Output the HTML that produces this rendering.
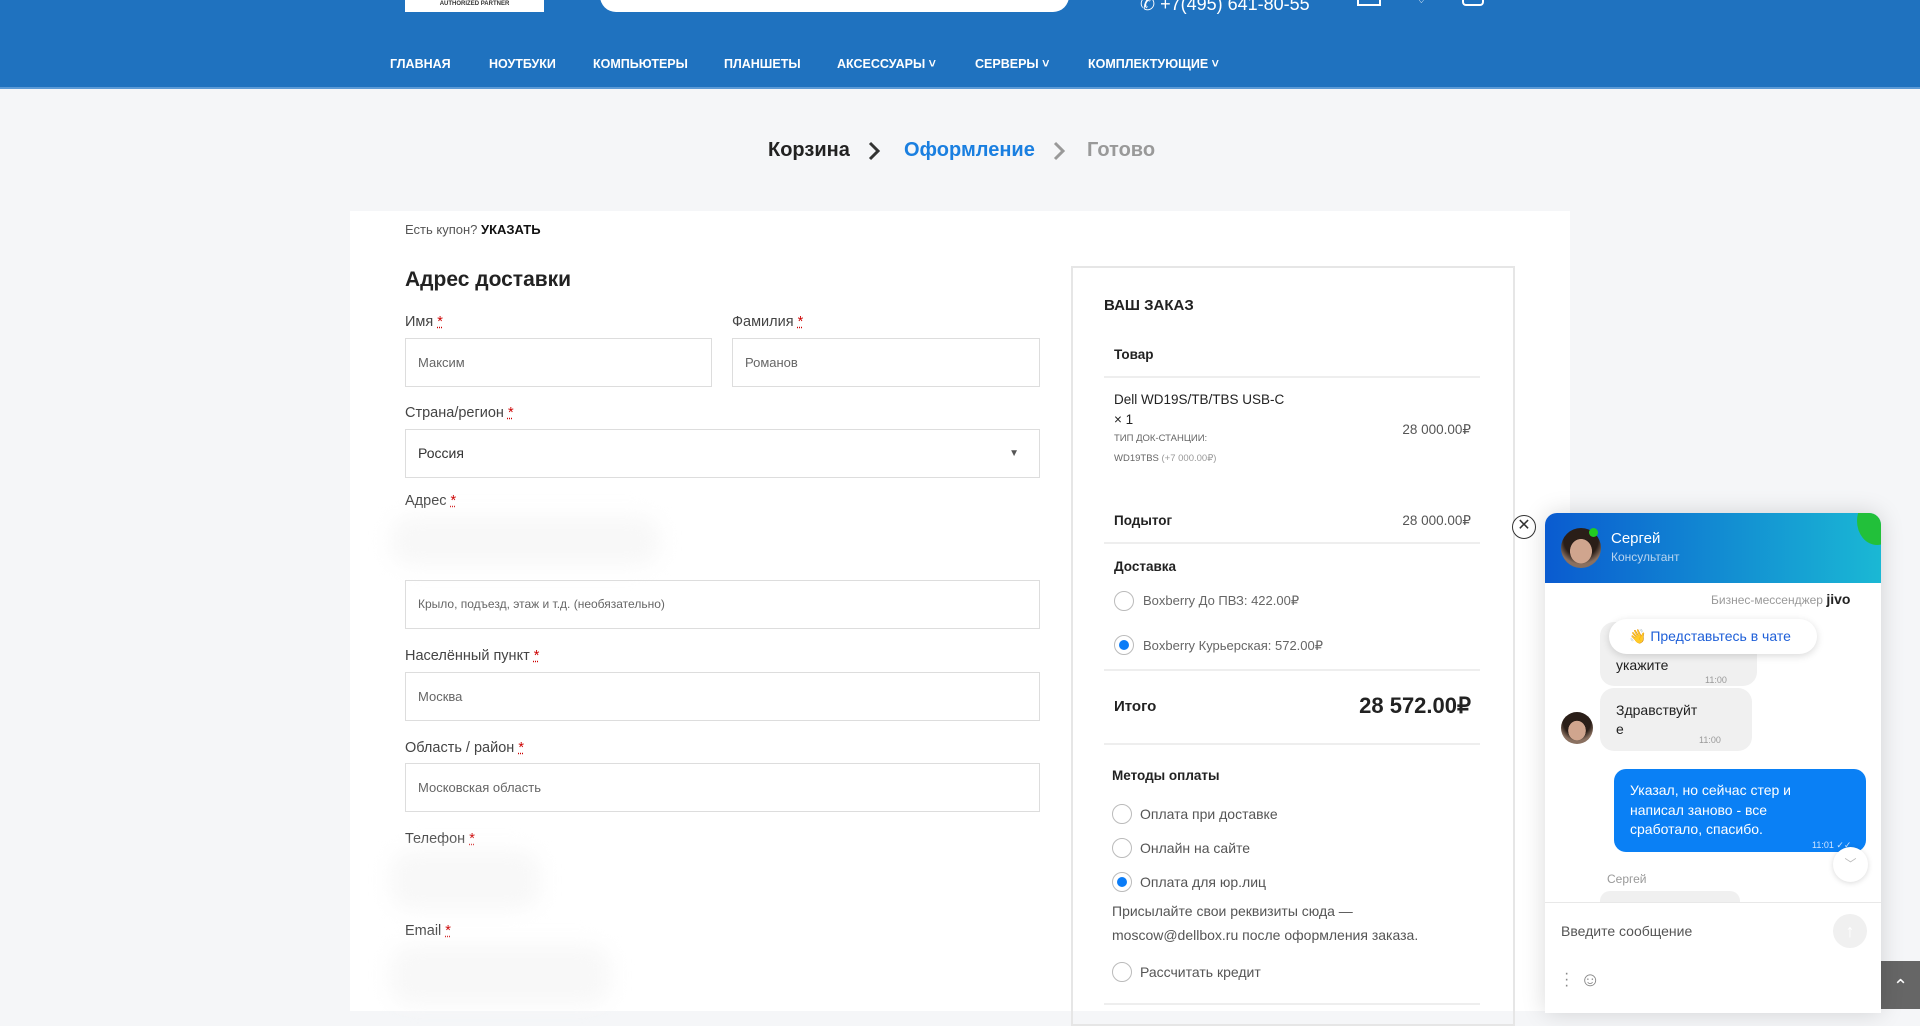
<!DOCTYPE html>
<html><head><meta charset="utf-8"><style>
*{box-sizing:border-box;margin:0;padding:0}
body{width:1920px;height:1009px;overflow:hidden;background:#f5f6f8;font-family:"Liberation Sans",sans-serif;color:#222;position:relative}
.a{position:absolute;white-space:nowrap}
.hdr{position:absolute;left:0;top:0;width:1920px;height:89px;background:#1f72bf;border-bottom:2px solid #5b9ad6}
.nav{top:57px;font-size:12.5px;font-weight:bold;color:#fff}
.card{position:absolute;left:350px;top:211px;width:1220px;height:800px;background:#fff}
.lbl{font-size:14.5px;color:#444}
.lbl b{color:#c00;font-weight:normal;text-decoration:underline dotted}
.inp{position:absolute;border:1px solid #ddd;height:49px;font-size:13px;color:#666;padding:0 12px;line-height:47px}
.blur{position:absolute;background:#f8f8f8;filter:blur(10px);border-radius:20px}
.box{position:absolute;left:1071px;top:266px;width:444px;height:760px;border:2px solid #e6e6e6}
.hl{position:absolute;left:1104px;width:376px;height:2px;background:#eee}
.rad{position:absolute;width:20px;height:20px;border-radius:50%;border:1px solid #bbb;background:#fff}
.rad.on::after{content:"";position:absolute;left:4px;top:4px;width:10px;height:10px;border-radius:50%;background:#0a7cf7}
.chat{position:absolute;left:1545px;top:513px;width:336px;height:500px;background:#fff;box-shadow:0 0 24px rgba(0,0,0,.15);border-radius:12px 12px 0 0;overflow:hidden}
.av{background:radial-gradient(ellipse 45% 50% at 50% 58%,#d0a58e 0 60%,transparent 62%),radial-gradient(circle at 50% 30%,#2a1e18 0 50%,#8a7060 70%)}
</style></head><body>
<div class="hdr"></div>
<div class="a" style="left:405px;top:0;width:139px;height:12px;background:#fff;font-size:6px;color:#333;text-align:center;line-height:6px;padding-top:1px;font-weight:bold">AUTHORIZED PARTNER</div>
<div class="a" style="left:600px;top:-20px;width:469px;height:32px;background:#fff;border-radius:0 0 16px 16px"></div>
<div class="a" style="left:1140px;top:-6px;font-size:18px;color:#fff">✆ +7(495) 641-80-55</div>
<div class="a" style="left:1357px;top:-10px;width:24px;height:16px;border:2px solid #fff;border-top:none"></div>
<div class="a" style="left:1416px;top:-8px;color:#fff;font-size:12px">♡</div>
<div class="a" style="left:1462px;top:-10px;width:22px;height:16px;border:2px solid #fff;border-radius:0 0 4px 4px"></div>
<div class="a nav" style="left:390px">ГЛАВНАЯ</div>
<div class="a nav" style="left:489px">НОУТБУКИ</div>
<div class="a nav" style="left:593px">КОМПЬЮТЕРЫ</div>
<div class="a nav" style="left:724px">ПЛАНШЕТЫ</div>
<div class="a nav" style="left:837px">АКСЕССУАРЫ ˅</div>
<div class="a nav" style="left:975px">СЕРВЕРЫ ˅</div>
<div class="a nav" style="left:1088px">КОМПЛЕКТУЮЩИЕ ˅</div>

<div class="a" style="left:768px;top:139px;font-size:20px;font-weight:bold;color:#222">Корзина</div>
<svg class="a" style="left:867px;top:140px" width="14" height="22" viewBox="0 0 14 22"><path d="M3 3l8 8-8 8" fill="none" stroke="#333" stroke-width="3"/></svg>
<div class="a" style="left:904px;top:139px;font-size:20px;font-weight:bold;color:#1a7fe0">Оформление</div>
<svg class="a" style="left:1052px;top:140px" width="14" height="22" viewBox="0 0 14 22"><path d="M3 3l8 8-8 8" fill="none" stroke="#999" stroke-width="3"/></svg>
<div class="a" style="left:1087px;top:139px;font-size:20px;font-weight:bold;color:#999">Готово</div>

<div class="card"></div>
<div class="a" style="left:405px;top:222px;font-size:13px;color:#555">Есть купон? <b style="color:#111">УКАЗАТЬ</b></div>
<div class="a" style="left:405px;top:268px;font-size:21px;font-weight:bold;color:#222">Адрес доставки</div>
<div class="a lbl" style="left:405px;top:314px">Имя <b>*</b></div>
<div class="a lbl" style="left:732px;top:314px">Фамилия <b>*</b></div>
<div class="inp" style="left:405px;top:338px;width:307px">Максим</div>
<div class="inp" style="left:732px;top:338px;width:308px">Романов</div>
<div class="a lbl" style="left:405px;top:405px">Страна/регион <b>*</b></div>
<div class="inp" style="left:405px;top:429px;width:635px;color:#333;font-size:14px">Россия<span style="position:absolute;right:20px;font-size:10px;color:#555">▼</span></div>
<div class="a lbl" style="left:405px;top:493px">Адрес <b>*</b></div>
<div class="blur" style="left:390px;top:516px;width:270px;height:50px"></div>
<div class="inp" style="left:405px;top:580px;width:635px;font-size:12px">Крыло, подъезд, этаж и т.д. (необязательно)</div>
<div class="a lbl" style="left:405px;top:648px">Населённый пункт <b>*</b></div>
<div class="inp" style="left:405px;top:672px;width:635px">Москва</div>
<div class="a lbl" style="left:405px;top:740px">Область / район <b>*</b></div>
<div class="inp" style="left:405px;top:763px;width:635px">Московская область</div>
<div class="a lbl" style="left:405px;top:831px">Телефон <b>*</b></div>
<div class="blur" style="left:390px;top:850px;width:150px;height:60px"></div>
<div class="a lbl" style="left:405px;top:923px">Email <b>*</b></div>
<div class="blur" style="left:390px;top:945px;width:220px;height:60px"></div>

<div class="box"></div>
<div class="a" style="left:1104px;top:297px;font-size:15px;font-weight:bold">ВАШ ЗАКАЗ</div>
<div class="a" style="left:1114px;top:347px;font-size:13.5px;font-weight:bold">Товар</div>
<div class="hl" style="top:376px"></div>
<div class="a" style="left:1114px;top:392px;font-size:13.5px">Dell WD19S/TB/TBS USB-C</div>
<div class="a" style="left:1114px;top:412px;font-size:13.5px">× 1</div>
<div class="a" style="left:1114px;top:433px;font-size:9.5px;color:#666">ТИП ДОК-СТАНЦИИ:</div>
<div class="a" style="left:1114px;top:453px;font-size:9.5px;color:#666">WD19TBS <span style="color:#999">(+7 000.00₽)</span></div>
<div class="a" style="right:449px;top:422px;font-size:13.5px;color:#555">28 000.00₽</div>
<div class="a" style="left:1114px;top:513px;font-size:13.5px;font-weight:bold">Подытог</div>
<div class="a" style="right:449px;top:513px;font-size:13.5px;color:#555">28 000.00₽</div>
<div class="hl" style="top:542px"></div>
<div class="a" style="left:1114px;top:559px;font-size:13.5px;font-weight:bold">Доставка</div>
<div class="rad" style="left:1114px;top:591px"></div>
<div class="a" style="left:1143px;top:593px;font-size:13px;color:#666">Boxberry До ПВЗ: 422.00₽</div>
<div class="rad on" style="left:1114px;top:635px"></div>
<div class="a" style="left:1143px;top:638px;font-size:13px;color:#666">Boxberry Курьерская: 572.00₽</div>
<div class="hl" style="top:669px"></div>
<div class="a" style="left:1114px;top:698px;font-size:15px;font-weight:bold">Итого</div>
<div class="a" style="right:449px;top:693px;font-size:22px;font-weight:bold">28 572.00₽</div>
<div class="hl" style="top:743px"></div>
<div class="a" style="left:1112px;top:768px;font-size:13.5px;font-weight:bold">Методы оплаты</div>
<div class="rad" style="left:1112px;top:804px"></div>
<div class="a" style="left:1140px;top:806px;font-size:14px;color:#555">Оплата при доставке</div>
<div class="rad" style="left:1112px;top:838px"></div>
<div class="a" style="left:1140px;top:840px;font-size:14px;color:#555">Онлайн на сайте</div>
<div class="rad on" style="left:1112px;top:872px"></div>
<div class="a" style="left:1140px;top:874px;font-size:14px;color:#555">Оплата для юр.лиц</div>
<div class="a" style="left:1112px;top:899px;font-size:14px;color:#555;line-height:24px;white-space:normal;width:360px">Присылайте свои реквизиты сюда — moscow@dellbox.ru после оформления заказа.</div>
<div class="rad" style="left:1112px;top:962px"></div>
<div class="a" style="left:1140px;top:964px;font-size:14px;color:#555">Рассчитать кредит</div>
<div class="hl" style="top:1003px"></div>

<div class="a" style="left:1512px;top:515px;width:24px;height:24px;border-radius:50%;border:1.5px solid #333;background:#fff;text-align:center;line-height:20px;font-size:16px;color:#333">✕</div>
<div class="a" style="left:1881px;top:961px;width:39px;height:48px;background:#666;color:#fff;text-align:center;font-size:18px;line-height:50px">⌃</div>
<div class="chat">
 <div class="a" style="left:0;top:0;width:336px;height:70px;background:linear-gradient(90deg,#0a5bd0,#1ab8d4)"></div>
 <div class="a" style="left:312px;top:-16px;width:40px;height:48px;border-radius:50%;background:#22c03a"></div>
 <div class="a av" style="left:16px;top:15px;width:40px;height:40px;border-radius:50%"></div>
 <div class="a" style="left:44px;top:15px;width:9px;height:9px;border-radius:50%;background:#2c2"></div>
 <div class="a" style="left:66px;top:17px;font-size:15px;color:#fff">Сергей</div>
 <div class="a" style="left:66px;top:37px;font-size:12px;color:#b9d4ef">Консультант</div>
 <div class="a" style="left:166px;top:78px;font-size:12px;color:#999">Бизнес-мессенджер <b style="color:#222;font-size:14px">jivo</b></div>
 <div class="a" style="left:55px;top:109px;width:157px;height:64px;background:#f0f0f0;border-radius:14px"></div>
 <div class="a" style="left:71px;top:144px;font-size:14px;color:#222">укажите</div>
 <div class="a" style="left:160px;top:162px;font-size:9px;color:#999">11:00</div>
 <div class="a" style="left:64px;top:106px;width:208px;height:35px;background:#fff;border-radius:18px;box-shadow:0 2px 8px rgba(0,0,0,.15);font-size:14px;color:#1e5fd8;line-height:35px;padding-left:20px">👋 Представьтесь в чате</div>
 <div class="a" style="left:55px;top:175px;width:152px;height:63px;background:#f0f0f0;border-radius:14px"></div>
 <div class="a" style="left:71px;top:188px;font-size:14px;color:#222;line-height:19px">Здравствуйт<br>е</div>
 <div class="a" style="left:154px;top:222px;font-size:9px;color:#999">11:00</div>
 <div class="a av" style="left:16px;top:199px;width:32px;height:32px;border-radius:50%"></div>
 <div class="a" style="left:69px;top:256px;width:252px;height:83px;background:#0a80f5;border-radius:12px"></div>
 <div class="a" style="left:85px;top:268px;font-size:14px;color:#fff;line-height:19.5px">Указал, но сейчас стер и<br>написал заново - все<br>сработало, спасибо.</div>
 <div class="a" style="left:267px;top:327px;font-size:9px;color:#cfe4ff">11:01 ✓✓</div>
 <div class="a" style="left:288px;top:334px;width:35px;height:35px;border-radius:50%;background:#fff;box-shadow:0 1px 6px rgba(0,0,0,.15);text-align:center;line-height:35px;color:#bbb;font-size:12px">﹀</div>
 <div class="a" style="left:62px;top:359px;font-size:12px;color:#999">Сергей</div>
 <div class="a" style="left:55px;top:378px;width:140px;height:20px;background:#f0f0f0;border-radius:12px"></div>
 <div class="a" style="left:0;top:389px;width:336px;height:111px;background:#fff;border-top:1px solid #e8e8e8"></div>
 <div class="a" style="left:16px;top:410px;font-size:14px;color:#555">Введите сообщение</div>
 <div class="a" style="left:288px;top:401px;width:34px;height:34px;border-radius:50%;background:#f0f0f0;color:#fff;text-align:center;line-height:34px;font-size:18px">↑</div>
 <div class="a" style="left:19px;top:458px;font-size:16px;color:#888;line-height:6px">·<br>·<br>·</div>
 <div class="a" style="left:35px;top:456px;font-size:20px;color:#888">☺</div>
</div>
</body></html>
